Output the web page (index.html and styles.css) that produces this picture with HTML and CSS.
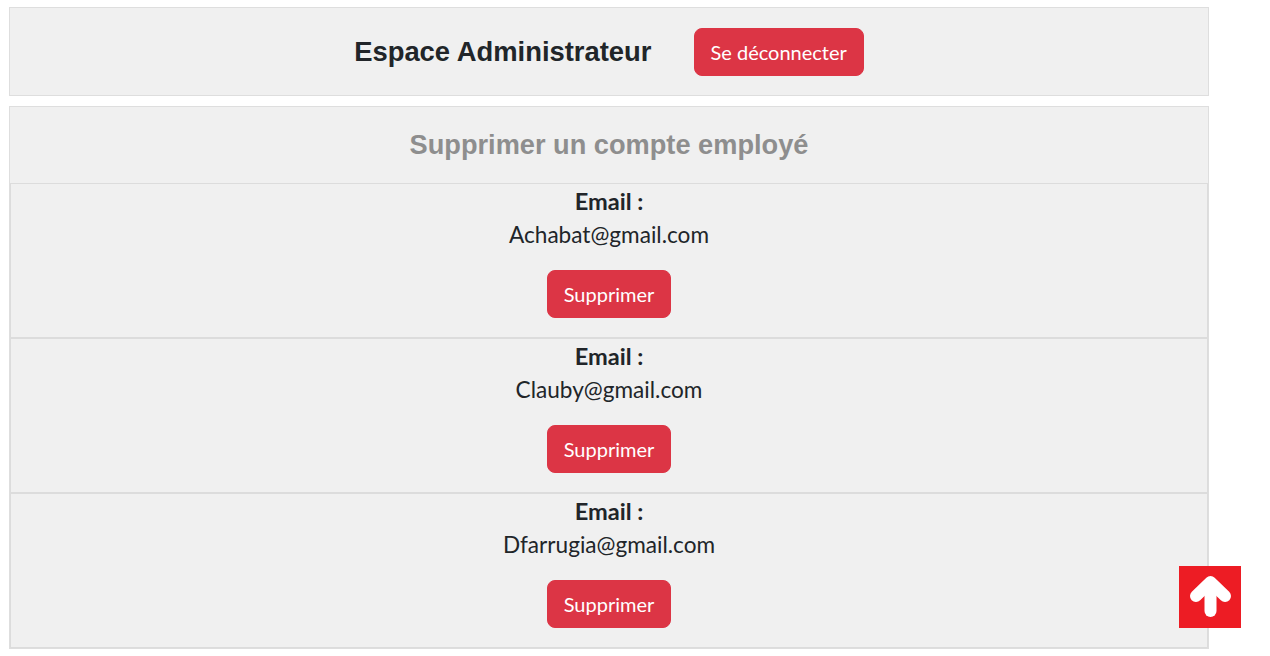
FILE: index.html
```html
<!DOCTYPE html>
<html lang="fr">
<head>
<meta charset="utf-8">
<title>Espace Administrateur</title>
<link rel="stylesheet" href="styles.css">
</head>
<body>
<div class="page">
  <header class="admin-header">
    <h1 class="admin-title">Espace Administrateur</h1>
    <a class="btn btn-danger" href="#">Se déconnecter</a>
  </header>

  <section class="panel">
    <h2 class="panel-title">Supprimer un compte employé</h2>
    <div class="row">
      <div class="row-label">Email :</div>
      <div class="row-email">Achabat@gmail.com</div>
      <a class="btn btn-danger row-btn" href="#">Supprimer</a>
    </div>
    <div class="row">
      <div class="row-label">Email :</div>
      <div class="row-email">Clauby@gmail.com</div>
      <a class="btn btn-danger row-btn" href="#">Supprimer</a>
    </div>
    <div class="row">
      <div class="row-label">Email :</div>
      <div class="row-email">Dfarrugia@gmail.com</div>
      <a class="btn btn-danger row-btn" href="#">Supprimer</a>
    </div>
  </section>
</div>

<a class="scroll-top" href="#" aria-label="Haut de page">
  <svg width="62" height="62" viewBox="0 0 62 62">
    <g fill="none" stroke="#fff" stroke-width="12" stroke-linecap="round" stroke-linejoin="round">
      <polyline points="17,30 31.5,16 46,30"/>
      <line x1="31.5" y1="17" x2="31.5" y2="45"/>
    </g>
  </svg>
</a>
</body>
</html>
```

FILE: styles.css
```css
html, body {
  margin: 0;
  padding: 0;
  background: #ffffff;
}

body {
  font-family: Lato, "Open Sans", sans-serif;
  color: #212529;
}

.page {
  width: 1200px;
  padding: 7px 0 0 9px;
}

.admin-header {
  box-sizing: border-box;
  height: 89px;
  border: 1px solid #dedede;
  background: #f0f0f0;
  display: flex;
  align-items: center;
  justify-content: center;
  gap: 42px;
}

.admin-title {
  margin: 0;
  font-family: "Liberation Sans", Arial, sans-serif;
  font-weight: 700;
  font-size: 27.4px;
  line-height: 1.2;
  color: #212529;
  position: relative;
  top: 1px;
}

.btn {
  display: inline-block;
  box-sizing: border-box;
  height: 48px;
  padding: 8px 16px;
  border: 1px solid transparent;
  border-radius: 8px;
  font-size: 20px;
  line-height: 30px;
  text-decoration: none;
}

.btn-danger {
  background: #dc3545;
  border-color: #dc3545;
  color: #ffffff;
}

.panel {
  margin-top: 10px;
  border: 1px solid #dedede;
  background: #f0f0f0;
}

.panel-title {
  margin: 0;
  height: 76px;
  display: flex;
  align-items: center;
  justify-content: center;
  font-family: "Liberation Sans", Arial, sans-serif;
  font-weight: 700;
  font-size: 27.2px;
  color: #8e8e8e;
}

.row {
  box-sizing: border-box;
  height: 155px;
  border: 1px solid #dcdcdc;
  display: flex;
  flex-direction: column;
  align-items: center;
  padding-top: 2px;
}

.row-label {
  font-weight: 700;
  font-size: 23.6px;
  line-height: 30px;
}

.row-email {
  margin-top: 4px;
  font-size: 22.6px;
  line-height: 30px;
}

.row-btn {
  margin-top: 20px;
}

.scroll-top {
  position: fixed;
  right: 29px;
  bottom: 28px;
  width: 62px;
  height: 62px;
  background: #ed1c24;
  display: block;
}

.scroll-top svg {
  display: block;
}
```
